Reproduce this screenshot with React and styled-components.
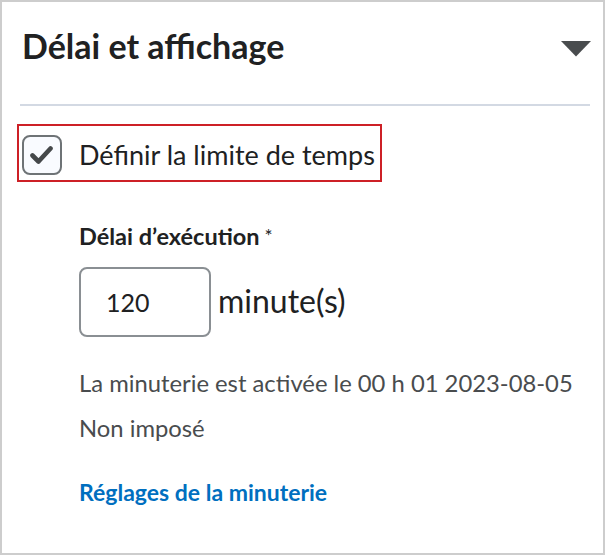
import React from "react";
import styled, { createGlobalStyle } from "styled-components";

const GlobalStyle = createGlobalStyle`
  html, body {
    margin: 0;
    padding: 0;
    background: #ffffff;
  }
  body {
    font-family: Lato, "Noto Sans", sans-serif;
    color: #202122;
  }
`;

const Panel = styled.section`
  box-sizing: border-box;
  width: 605px;
  height: 555px;
  border: 2px solid #cdcdcd;
  padding: 0 13px 0 18px;
`;

const Header = styled.div`
  display: flex;
  align-items: center;
  justify-content: space-between;
  height: 88px;
  padding: 0 0 14px 2px;
  border-bottom: 2px solid #d3d9e3;
`;

const Title = styled.h2`
  margin: 0;
  font-size: 34px;
  line-height: 40px;
  font-weight: 700;
  color: #202122;
`;

const Caret = styled.svg`
  width: 30px;
  height: 16px;
  margin: 6px -1px 0 0;
`;

const CheckRow = styled.label`
  display: inline-flex;
  align-items: center;
  gap: 17px;
  margin-top: 18px;
  margin-left: -3px;
  padding: 9px 5px 5px 3px;
  border: 2px solid #cd2026;
`;

const Box = styled.span`
  box-sizing: border-box;
  width: 40px;
  height: 40px;
  border: 2px solid #6e7376;
  border-radius: 8px;
  background: #f9fbff;
  display: flex;
  align-items: center;
  justify-content: center;
`;

const CheckText = styled.span`
  font-size: 27px;
  line-height: 32px;
  color: #202122;
`;

const Body = styled.div`
  padding-left: 59px;
`;

const FieldLabel = styled.div`
  margin-top: 40px;
  font-size: 23.5px;
  line-height: 28px;
  font-weight: 700;
  color: #202122;

  span {
    font-weight: 400;
    font-size: 19px;
    margin-left: 5px;
    vertical-align: 2px;
  }
`;

const InputRow = styled.div`
  display: flex;
  align-items: flex-start;
  gap: 7px;
  margin-top: 17px;
`;

const NumberBox = styled.div`
  box-sizing: border-box;
  width: 132px;
  height: 70px;
  border: 2px solid #8a8f93;
  border-radius: 8px;
  padding-left: 25px;
  display: flex;
  align-items: center;
  font-size: 25px;
  color: #202122;
`;

const Unit = styled.span`
  font-size: 32px;
  line-height: 38px;
  margin-top: 15px;
  color: #202122;
`;

const Info = styled.p`
  margin: ${(p) => p.top}px 0 0;
  font-size: 23.8px;
  line-height: 28px;
  color: #494c4e;
`;

const Link = styled.a`
  display: block;
  margin-top: 36px;
  font-size: 23px;
  line-height: 28px;
  font-weight: 700;
  color: #006fbf;
  text-decoration: none;
`;

export default function App() {
  return (
    <>
      <GlobalStyle />
      <Panel>
        <Header>
          <Title>Délai et affichage</Title>
          <Caret viewBox="0 0 30 16">
            <path d="M0 0 H30 L15 15.5 Z" fill="#494c4e" />
          </Caret>
        </Header>
        <CheckRow>
          <Box>
            <svg width="24" height="20" viewBox="0 0 24 20">
              <path
                d="M2.5 10.5 L8.5 16.5 L20.5 3.5"
                fill="none"
                stroke="#45484a"
                strokeWidth="4.6"
                strokeLinecap="round"
                strokeLinejoin="round"
              />
            </svg>
          </Box>
          <CheckText>Définir la limite de temps</CheckText>
        </CheckRow>
        <Body>
          <FieldLabel>
            Délai d’exécution<span>*</span>
          </FieldLabel>
          <InputRow>
            <NumberBox>120</NumberBox>
            <Unit>minute(s)</Unit>
          </InputRow>
          <Info top={32}>La minuterie est activée le 00 h 01 2023-08-05</Info>
          <Info top={17}>Non imposé</Info>
          <Link href="#">Réglages de la minuterie</Link>
        </Body>
      </Panel>
    </>
  );
}
